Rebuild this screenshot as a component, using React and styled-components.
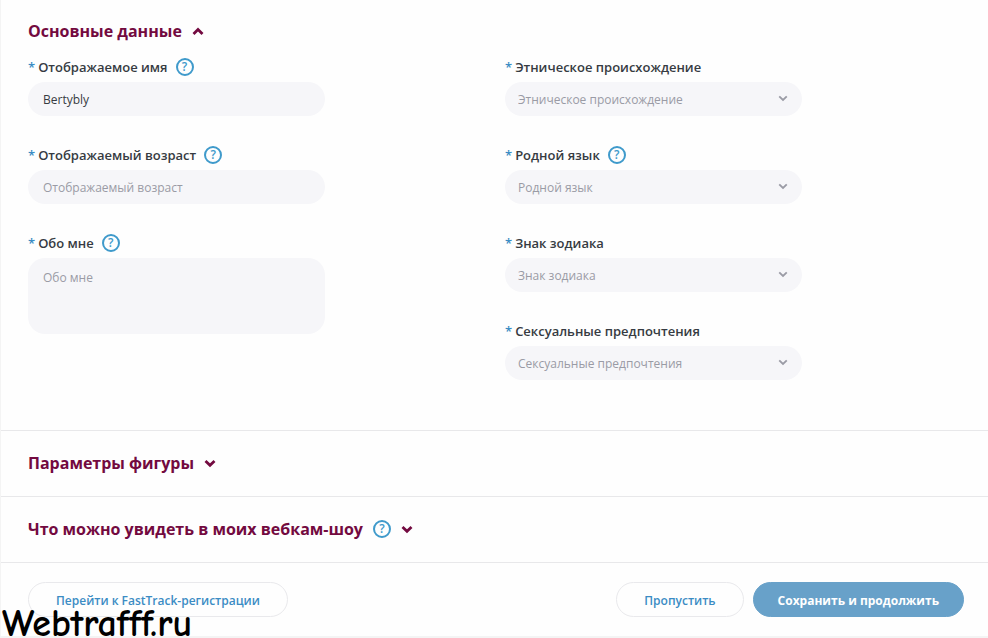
import React, { useState } from "react";
import styled, { createGlobalStyle, css } from "styled-components";

const GlobalStyle = createGlobalStyle`
  *, *::before, *::after { box-sizing: border-box; }
  body {
    margin: 0;
    background: #fefefe;
    color: #363b42;
    font-family: "Open Sans", "Noto Sans", sans-serif;
    font-size: 13px;
  }
  button, input, textarea, select { font: inherit; color: inherit; }
`;

const Page = styled.main`
  position: relative;
  border-left: 1px solid #f4f4f4;
`;

const Section = styled.section`
  padding: ${(p) => (p.$open ? "19px 24px 50px 27px" : "20px 24px 21px 27px")};
  border-bottom: 1px solid #e8e8ea;
`;

const SectionHeader = styled.header`
  display: flex;
  align-items: center;
  gap: 10px;
  min-height: 24px;
`;

const SectionTitle = styled.h2`
  margin: 0;
  font-size: 16px;
  line-height: 24px;
  font-weight: 700;
  color: #730a40;
`;

const ToggleButton = styled.button`
  display: flex;
  padding: 0;
  border: 0;
  background: none;
  color: #730a40;
  cursor: pointer;
`;

const HelpButton = styled.button`
  display: grid;
  place-items: center;
  width: 18px;
  height: 18px;
  padding: 0;
  border: 2px solid #3f9acb;
  border-radius: 50%;
  background: none;
  color: #3f9acb;
  font-size: 12px;
  line-height: 14px;
  font-weight: 600;
  cursor: pointer;
`;

const Columns = styled.div`
  display: grid;
  grid-template-columns: 1fr 1fr;
  gap: 18px;
  margin-top: 14px;
`;

const Column = styled.div`
  display: flex;
  flex-direction: column;
  gap: 29px;
`;

const Field = styled.div`
  display: flex;
  flex-direction: column;
  gap: 5px;
  width: 100%;
  max-width: 297px;
`;

const LabelRow = styled.div`
  display: flex;
  align-items: center;
  gap: 8px;
  height: 20px;
`;

const Label = styled.label`
  font-size: 13px;
  line-height: 18px;
  font-weight: 600;
`;

const Required = styled.span`
  margin-right: 3px;
  color: #3b8cc4;
`;

const control = css`
  display: block;
  width: 100%;
  border: 0;
  outline-color: #3f9acb;
  background: #f6f6f9;
  font-size: 12px;
  line-height: 18px;
  font-weight: 500;
  &::placeholder { color: #9a9ba5; opacity: 1; }
`;

const TextInput = styled.input`
  ${control}
  height: 34px;
  padding: 0 15px;
  border-radius: 17px;
`;

const TextArea = styled.textarea`
  ${control}
  height: 76px;
  padding: 11px 15px;
  border-radius: 17px;
  resize: none;
`;

const SelectBox = styled.div`
  position: relative;
  color: #9a9ba5;
`;

const Select = styled.select`
  ${control}
  height: 34px;
  padding: 2px 32px 0 13px;
  border-radius: 17px;
  appearance: none;
`;

const SelectArrow = styled.span`
  position: absolute;
  top: 0;
  bottom: 2px;
  right: 14px;
  display: flex;
  align-items: center;
  pointer-events: none;
`;

const Actions = styled.footer`
  display: flex;
  align-items: center;
  gap: 9px;
  padding: 19px 24px 19px 27px;
  border-bottom: 2px solid #f4f4f4;
`;

const ActionButton = styled.button`
  height: 35px;
  padding: 2px ${(p) => (p.$primary ? 24 : 27)}px 0;
  border: 1px solid ${(p) => (p.$primary ? "#68a1c9" : "#e9e9ec")};
  border-radius: 18px;
  background: ${(p) => (p.$primary ? "#68a1c9" : "#fefefe")};
  color: ${(p) => (p.$primary ? "#fff" : "#3b8cc4")};
  font-size: 12px;
  line-height: 18px;
  font-weight: ${(p) => (p.$primary ? 700 : 600)};
  cursor: pointer;
`;

const Spacer = styled.div`
  flex: 1;
`;

const Watermark = styled.div`
  position: absolute;
  left: 1px;
  bottom: 0;
  font-family: "Comic Sans MS", "Comic Neue", cursive;
  font-size: 38px;
  line-height: 28px;
  font-weight: 700;
  font-variant-ligatures: none;
  color: #000;
  pointer-events: none;
`;

function Chevron({ up, size = 12, weight = 2.8 }) {
  return (
    <svg width={size} height={size} viewBox="0 0 12 12" fill="none" stroke="currentColor" strokeWidth={weight} aria-hidden="true">
      <path d={up ? "M1.5 9 6 4.500l4.500 4.500" : "M1.500 4 6 8.300 10.500 4"} />
    </svg>
  );
}

function Help({ about }) {
  return <HelpButton type="button" aria-label={about}>?</HelpButton>;
}

function FormField({ id, label, help, children }) {
  return (
    <Field>
      <LabelRow>
        <Label htmlFor={id}><Required>*</Required>{label}</Label>
        {help && <Help about={label} />}
      </LabelRow>
      {children}
    </Field>
  );
}

function SelectField({ id, label, help }) {
  return (
    <FormField id={id} label={label} help={help}>
      <SelectBox>
        <Select id={id} defaultValue="">
          <option value="">{label}</option>
        </Select>
        <SelectArrow><Chevron size={10} weight={2.2} /></SelectArrow>
      </SelectBox>
    </FormField>
  );
}

function Panel({ title, help, initiallyOpen = false, children }) {
  const [open, setOpen] = useState(initiallyOpen);
  return (
    <Section $open={open && Boolean(children)}>
      <SectionHeader>
        <SectionTitle>{title}</SectionTitle>
        {help && <Help about={title} />}
        <ToggleButton type="button" aria-label={title} aria-expanded={open} onClick={() => setOpen(!open)}>
          <Chevron up={open} />
        </ToggleButton>
      </SectionHeader>
      {open && children}
    </Section>
  );
}

export default function App() {
  return (
    <>
      <GlobalStyle />
      <Page>
        <Panel title="Основные данные" initiallyOpen>
          <Columns>
            <Column>
              <FormField id="name" label="Отображаемое имя" help>
                <TextInput id="name" defaultValue="Bertybly" />
              </FormField>
              <FormField id="age" label="Отображаемый возраст" help>
                <TextInput id="age" placeholder="Отображаемый возраст" />
              </FormField>
              <FormField id="about" label="Обо мне" help>
                <TextArea id="about" placeholder="Обо мне" />
              </FormField>
            </Column>
            <Column>
              <SelectField id="ethnicity" label="Этническое происхождение" />
              <SelectField id="language" label="Родной язык" help />
              <SelectField id="zodiac" label="Знак зодиака" />
              <SelectField id="preferences" label="Сексуальные предпочтения" />
            </Column>
          </Columns>
        </Panel>
        <Panel title="Параметры фигуры" />
        <Panel title="Что можно увидеть в моих вебкам-шоу" help />
        <Actions>
          <ActionButton type="button">Перейти к FastTrack-регистрации</ActionButton>
          <Spacer />
          <ActionButton type="button">Пропустить</ActionButton>
          <ActionButton type="submit" $primary>Сохранить и продолжить</ActionButton>
        </Actions>
        <Watermark>Webtrafff.ru</Watermark>
      </Page>
    </>
  );
}
